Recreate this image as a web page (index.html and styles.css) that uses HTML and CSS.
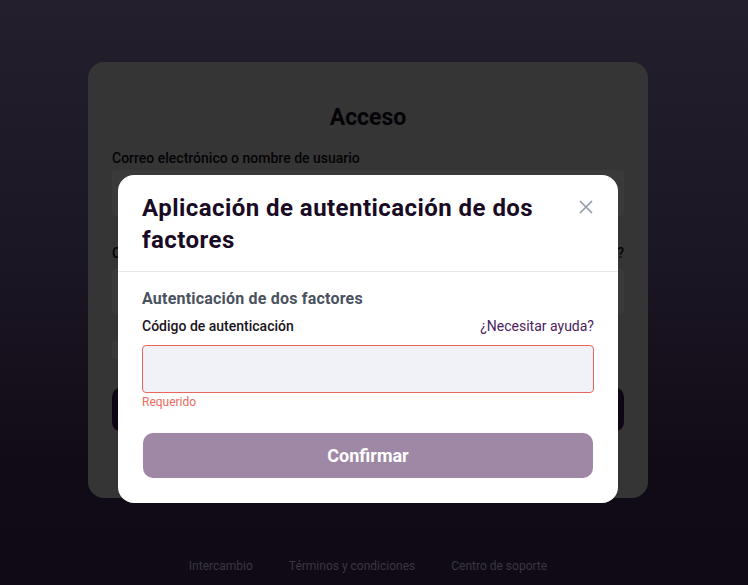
FILE: index.html
```html
<!DOCTYPE html>
<html lang="es">
<head>
<meta charset="utf-8">
<title>Acceso</title>
<link rel="stylesheet" href="styles.css">
</head>
<body>
<main class="page">
  <section class="card">
    <h1 class="card-title">Acceso</h1>
    <label class="card-label">Correo electrónico o nombre de usuario</label>
    <div class="card-input"></div>
    <div class="card-row">
      <label class="card-label">Contraseña</label>
      <span class="card-label">¿Olvidó su contraseña?</span>
    </div>
    <div class="card-input"></div>
    <div class="card-check"></div>
    <div class="card-button"></div>
  </section>
  <footer class="footer">
    <a class="footer-link">Intercambio</a>
    <a class="footer-link">Términos y condiciones</a>
    <a class="footer-link">Centro de soporte</a>
  </footer>
</main>

<div class="modal">
  <div class="modal-header">
    <h2 class="modal-title">Aplicación de autenticación de dos factores</h2>
    <button class="modal-close" aria-label="Cerrar">
      <svg width="14" height="14" viewBox="0 0 14 14"><path d="M1 1L13 13M13 1L1 13" stroke="#8d99a6" stroke-width="1.6" fill="none"/></svg>
    </button>
  </div>
  <div class="modal-body">
    <h3 class="section-title">Autenticación de dos factores</h3>
    <div class="field-row">
      <label class="field-label">Código de autenticación</label>
      <a class="help-link">¿Necesitar ayuda?</a>
    </div>
    <div class="field-input"></div>
    <div class="field-error">Requerido</div>
    <button class="confirm">Confirmar</button>
  </div>
</div>
</body>
</html>
```
FILE: styles.css
```css
* { box-sizing: border-box; }
html, body { margin: 0; height: 100%; }
body {
  background: linear-gradient(180deg, #231f2c 0%, #1b1623 45%, #100b16 80%, #0f0a15 100%);
  font-family: Roboto, "Noto Sans", sans-serif;
  color: #000;
}
.page {
  display: flex;
  flex-direction: column;
  align-items: center;
  padding-top: 62px;
  padding-right: 12px;
  min-height: 585px;
}
.card {
  width: 560px;
  height: 436px;
  background: #353535;
  border-radius: 16px;
  padding: 41px 24px 0;
  display: flex;
  flex-direction: column;
}
.card-title {
  margin: 0 0 16px;
  text-align: center;
  font-size: 23px;
  font-weight: 700;
  line-height: 30px;
  color: #050307;
}
.card-label {
  font-size: 14px;
  font-weight: 500;
  line-height: 18px;
  color: #050307;
}
.card-row { display: flex; justify-content: space-between; margin-top: 28px; }
.card-input {
  height: 46px;
  margin-top: 3px;
  background: #3a3a3a;
  border-radius: 4px;
}
.card-row + .card-input { margin-top: 6px; }
.card-check {
  margin-top: 27px;
  height: 18px;
  width: 120px;
  background: #3a3a3a;
  border-radius: 3px;
}
.card-button {
  margin-top: 28px;
  height: 45px;
  border-radius: 10px;
  background: #0e0612;
}
.footer {
  margin-top: 60px;
  display: flex;
  gap: 36px;
}
.footer-link {
  font-size: 12px;
  color: #3b3640;
  line-height: 16px;
}
.modal {
  position: fixed;
  left: 118px;
  top: 175px;
  width: 500px;
  background: #fff;
  border-radius: 16px;
}
.modal-header {
  display: flex;
  align-items: flex-start;
  justify-content: space-between;
  padding: 17px 24px 15px;
  border-bottom: 1px solid #e6e8ec;
}
.modal-title {
  margin: 0;
  width: 410px;
  font-size: 24px;
  font-weight: 700;
  line-height: 32px;
  letter-spacing: 0.45px;
  color: #1a0b24;
}
.modal-close {
  border: 0;
  background: none;
  padding: 0;
  margin-top: 7px;
  width: 16px;
  height: 16px;
  display: flex;
  align-items: center;
  justify-content: center;
}
.modal-body {
  padding: 16px 24px 25px;
  display: flex;
  flex-direction: column;
}
.section-title {
  margin: 0;
  font-size: 16px;
  font-weight: 700;
  line-height: 22px;
  letter-spacing: 0.2px;
  color: #4a5260;
}
.field-row {
  display: flex;
  justify-content: space-between;
  margin-top: 7px;
  line-height: 18px;
  font-size: 14px;
}
.field-label { font-weight: 500; color: #1a1420; }
.help-link { color: #4b1d5e; }
.field-input {
  margin-top: 10px;
  height: 48px;
  background: #f0f2f7;
  border: 1px solid #e8665e;
  border-radius: 4px;
}
.field-error {
  font-size: 12px;
  line-height: 16px;
  color: #ec6a60;
  margin-top: 1px;
}
.confirm {
  margin: 23px 1px 0;
  height: 45px;
  border: 0;
  border-radius: 10px;
  background: #9f88a6;
  color: #fff;
  font-family: inherit;
  font-size: 18px;
  font-weight: 700;
}
```
